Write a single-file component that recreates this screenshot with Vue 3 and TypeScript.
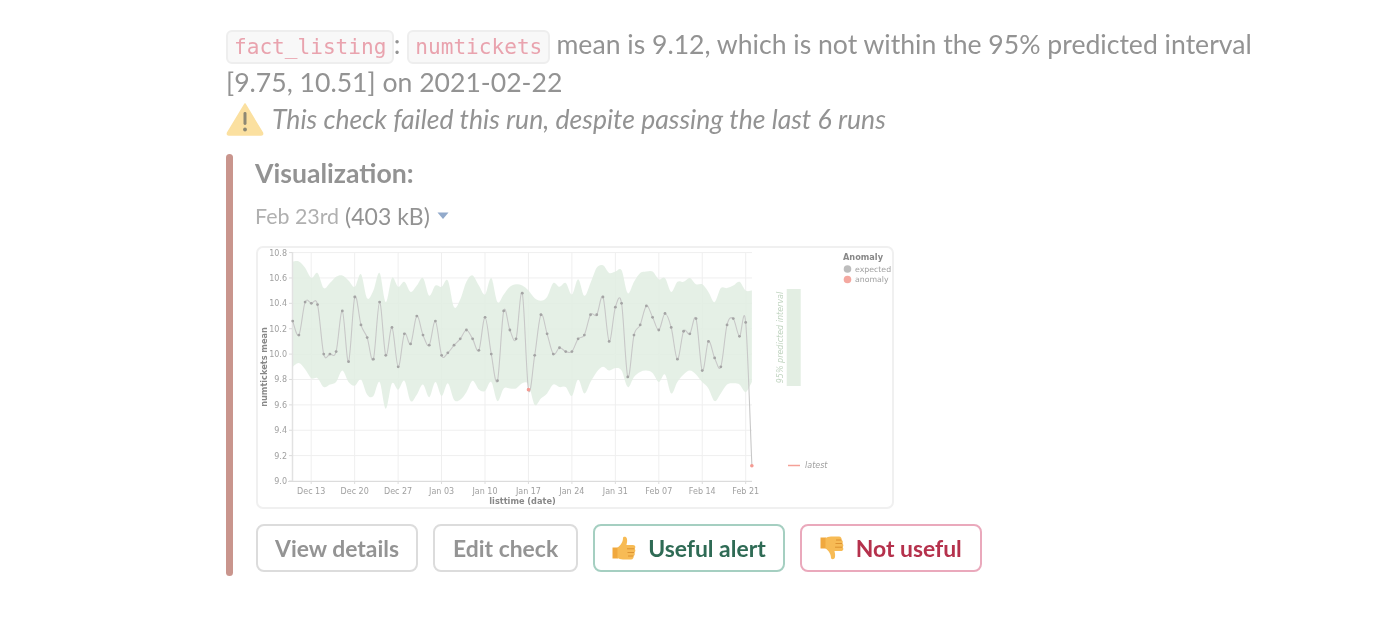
<script setup lang="ts">
const mean: number[] = [10.26,10.15,10.41,10.40,10.39,10.0,10.0,10.02,10.34,9.94,10.45,10.23,10.13,9.96,10.41,9.99,10.21,9.90,10.16,10.08,10.30,10.15,10.07,10.26,9.99,10.01,10.07,10.12,10.19,10.12,10.03,10.29,10.0,9.79,10.34,10.19,10.12,10.48,9.72,9.99,10.31,10.16,10.0,10.05,10.02,10.02,10.12,10.15,10.31,10.31,10.45,10.10,10.37,10.40,9.82,10.15,10.23,10.38,10.29,10.19,10.32,10.21,9.96,10.18,10.16,10.28,9.87,10.10,9.97,9.90,10.23,10.28,10.14,10.25,9.12]
const upper: number[] = [10.73,10.73,10.68,10.6,10.64,10.52,10.56,10.61,10.62,10.58,10.53,10.63,10.44,10.5,10.64,10.41,10.6,10.53,10.57,10.49,10.54,10.6,10.46,10.54,10.53,10.58,10.37,10.43,10.57,10.62,10.54,10.47,10.6,10.41,10.47,10.53,10.55,10.54,10.5,10.44,10.42,10.45,10.56,10.53,10.56,10.47,10.59,10.46,10.56,10.68,10.7,10.64,10.65,10.66,10.48,10.57,10.64,10.65,10.65,10.59,10.60,10.49,10.57,10.57,10.6,10.55,10.55,10.49,10.41,10.52,10.52,10.54,10.57,10.5,10.5]
const lower: number[] = [9.9,9.93,9.88,9.81,9.81,9.74,9.76,9.78,9.87,9.78,9.75,9.8,9.68,9.67,9.78,9.57,9.77,9.72,9.79,9.63,9.68,9.76,9.66,9.78,9.67,9.77,9.64,9.64,9.7,9.79,9.72,9.71,9.78,9.63,9.73,9.73,9.73,9.77,9.76,9.6,9.65,9.69,9.76,9.74,9.74,9.67,9.8,9.69,9.78,9.86,9.9,9.87,9.89,9.87,9.74,9.82,9.86,9.87,9.85,9.78,9.84,9.69,9.78,9.84,9.87,9.84,9.78,9.73,9.63,9.69,9.76,9.77,9.76,9.7,9.78]

const X0 = 292.7
const STEP = 6.205
const px = (i: number): number => X0 + i * STEP
const py = (v: number): number => 481 - (v - 9) * 126.9
type Pt = [number, number]
const pts = (a: number[]): Pt[] => a.map((v, i): Pt => [px(i), py(v)])

function curve(p: Pt[]): string {
  let d = ''
  for (let i = 0; i < p.length - 1; i++) {
    const p0 = p[Math.max(i - 1, 0)]
    const p1 = p[i]
    const p2 = p[i + 1]
    const p3 = p[Math.min(i + 2, p.length - 1)]
    const c1x = p1[0] + (p2[0] - p0[0]) / 6
    const c1y = p1[1] + (p2[1] - p0[1]) / 6
    const c2x = p2[0] - (p3[0] - p1[0]) / 6
    const c2y = p2[1] - (p3[1] - p1[1]) / 6
    d += ` C${c1x.toFixed(1)} ${c1y.toFixed(1)} ${c2x.toFixed(1)} ${c2y.toFixed(1)} ${p2[0].toFixed(1)} ${p2[1].toFixed(1)}`
  }
  return d
}

const up = pts(upper)
const low = pts(lower).reverse()
const bandPath = `M${up[0][0]} ${up[0][1]}${curve(up)} L${low[0][0]} ${low[0][1]}${curve(low)} Z`
const linePath = `M${px(0)} ${py(mean[0])}${curve(pts(mean))}`
const dots = mean.map((v, i) => ({ x: px(i), y: py(v), bad: i === 38 || i === 74 }))

const yTicks = [10.8, 10.6, 10.4, 10.2, 10.0, 9.8, 9.6, 9.4, 9.2, 9.0].map((v) => ({ y: py(v), label: v.toFixed(1) }))
const xTicks = ['Dec 13', 'Dec 20', 'Dec 27', 'Jan 03', 'Jan 10', 'Jan 17', 'Jan 24', 'Jan 31', 'Feb 07', 'Feb 14', 'Feb 21'].map((label, i) => ({ x: 311.2 + i * 43.45, label }))
</script>

<template>
  <main class="page">
    <p class="line">
      <code class="code">fact_listing</code>: <code class="code">numtickets</code> mean is 9.12, which is not within the 95% predicted interval<br />[9.75, 10.51] on 2021-02-22
    </p>
    <p class="warn">
      <svg class="warn-icon" viewBox="0 0 38 34" aria-hidden="true">
        <path d="M19 2 L36.500 31 Q37 33 35 33 L3 33 Q1 33 1.500 31 Z" fill="#fbe0a0" stroke="#fbe0a0" stroke-width="1.500" stroke-linejoin="round" />
        <rect x="17.500" y="10" width="3" height="13" rx="1.400" fill="#8d8873" />
        <circle cx="19" cy="27.500" r="1.900" fill="#8d8873" />
      </svg>
      <em>This check failed this run, despite passing the last 6 runs</em>
    </p>
    <section class="attachment">
      <div class="bar"></div>
      <div class="body">
        <h2 class="title">Visualization:</h2>
        <div class="file">
          <span class="date">Feb 23rd</span>
          <span class="size">(403 kB)</span>
          <svg class="caret" viewBox="0 0 12 8" aria-hidden="true"><path d="M0.500 0.500 H11.500 L6 7 Z" fill="#92aacb" /></svg>
        </div>
        <div class="frame">
          <svg class="chart" viewBox="258 248 634 259" role="img" aria-label="numtickets mean chart">
            <g stroke="#efefef" stroke-width="1">
              <line v-for="t in yTicks" :key="t.label" x1="292" x2="752" :y1="t.y" :y2="t.y" />
              <line v-for="t in xTicks" :key="t.label" :x1="t.x" :x2="t.x" y1="252.500" y2="481" />
            </g>
            <path :d="bandPath" fill="#e1eee2" fill-opacity="0.88" />
            <g stroke="#dcdcdc" stroke-width="1">
              <line x1="292.500" x2="292.500" y1="252" y2="481" stroke-width="1.500" stroke="#e2e2e2" />
              <line x1="288" x2="752" y1="481.500" y2="481.500" />
              <line v-for="t in yTicks" :key="'m' + t.label" x1="289" x2="292" :y1="t.y" :y2="t.y" />
              <line v-for="t in xTicks" :key="'m' + t.label" :x1="t.x" :x2="t.x" y1="481" y2="484" />
            </g>
            <path :d="linePath" fill="none" stroke="#c8c8c8" stroke-width="1.100" />
            <circle v-for="(d, i) in dots" :key="i" :cx="d.x" :cy="d.y" :r="d.bad ? 1.800 : 1.400" :fill="d.bad ? '#f49a92' : '#a4a4a4'" />
            <g class="tick">
              <text v-for="t in yTicks" :key="'l' + t.label" x="287" :y="t.y + 3" text-anchor="end">{{ t.label }}</text>
              <text v-for="t in xTicks" :key="'l' + t.label" :x="t.x" y="493.500" text-anchor="middle">{{ t.label }}</text>
            </g>
            <text class="axis" x="522.500" y="504" text-anchor="middle">listtime (date)</text>
            <text class="axis" transform="translate(266.500 367) rotate(-90)" text-anchor="middle">numtickets mean</text>
            <rect x="786.700" y="289" width="14" height="97" fill="#e3eee3" />
            <text class="interval" transform="translate(783 337.500) rotate(-90)" text-anchor="middle">95% predicted interval</text>
            <text class="axis legend-title" x="843" y="260">Anomaly</text>
            <circle cx="847.500" cy="269" r="3.800" fill="#bdbdbd" />
            <circle cx="847.500" cy="279.500" r="3.800" fill="#f4a8a0" />
            <text class="legend" x="855" y="272">expected</text>
            <text class="legend" x="855" y="282">anomaly</text>
            <line x1="788" x2="800" y1="465.500" y2="465.500" stroke="#f4a097" stroke-width="1.500" />
            <text class="latest" x="805" y="468">latest</text>
          </svg>
        </div>
        <div class="actions">
          <button class="btn" type="button">View details</button>
          <button class="btn wide" type="button">Edit check</button>
          <button class="btn good" type="button">
            <svg class="thumb" viewBox="0 0 24 24" aria-hidden="true">
              <path d="M0.500 11.500 H6 V22.500 H0.500 Z" fill="#f0a83e" />
              <path d="M5.500 11.500 C8.500 9.500 11 6 11 2 C11 0.500 14.500 0 15 3 C15.500 6 14.500 8 14.500 9 H21 C23.800 9 23.800 12 22.500 12.800 C23.800 13.800 23.600 16 22.300 16.500 C23.300 17.500 22.800 19.500 21.500 20 C22 21.500 21 23.500 19 23.500 H11 C8.500 23.500 7 22.500 5.500 22 Z" fill="#f7bb55" />
              <path d="M15 12.800 H22.500 M15.500 16.500 H22.300 M16 20 H21.500" stroke="#d98f2e" stroke-width="0.900" fill="none" />
            </svg>
            Useful alert
          </button>
          <button class="btn wide bad" type="button">
            <svg class="thumb flip" viewBox="0 0 24 24" aria-hidden="true">
              <path d="M0.500 11.500 H6 V22.500 H0.500 Z" fill="#f0a83e" />
              <path d="M5.500 11.500 C8.500 9.500 11 6 11 2 C11 0.500 14.500 0 15 3 C15.500 6 14.500 8 14.500 9 H21 C23.800 9 23.800 12 22.500 12.800 C23.800 13.800 23.600 16 22.300 16.500 C23.300 17.500 22.800 19.500 21.500 20 C22 21.500 21 23.500 19 23.500 H11 C8.500 23.500 7 22.500 5.500 22 Z" fill="#f7bb55" />
              <path d="M15 12.800 H22.500 M15.500 16.500 H22.300 M16 20 H21.500" stroke="#d98f2e" stroke-width="0.900" fill="none" />
            </svg>
            Not useful
          </button>
        </div>
      </div>
    </section>
  </main>
</template>

<style scoped>
.page {
  box-sizing: border-box;
  width: 1400px;
  height: 620px;
  padding: 26px 0 0 226px;
  overflow: hidden;
  font-family: Lato, "Liberation Sans", sans-serif;
  font-size: 26.6px;
  color: #939393;
  filter: blur(0.45px);
}
.line {
  width: 1040px;
  margin: 0;
  line-height: 37px;
}
.code {
  display: inline-block;
  margin-right: -0.6px;
  padding: 0 6px;
  border: 2px solid #eeeeee;
  border-radius: 6px;
  background: #f8f8f8;
  font-family: "DejaVu Sans Mono", monospace;
  font-size: 21.1px;
  line-height: 30px;
  color: #e9a3ae;
}
.warn {
  display: flex;
  align-items: center;
  gap: 8px;
  height: 37px;
  margin: -1px 0 0;
}
.warn-icon {
  width: 38px;
  height: 34px;
  flex: none;
}
.attachment {
  display: flex;
  gap: 22px;
  margin-top: 17px;
}
.bar {
  width: 7px;
  height: 422px;
  border-radius: 4px;
  background: #c9958d;
}
.title {
  margin: 1px 0 0;
  font-size: 26.6px;
  font-weight: 700;
  line-height: 36px;
}
.file {
  display: flex;
  align-items: center;
  gap: 6px;
  height: 28px;
  margin-top: 11px;
}
.date {
  font-size: 21.4px;
  color: #b0b0b0;
}
.size {
  font-size: 23px;
  color: #939393;
}
.caret {
  width: 12px;
  height: 8px;
  margin-left: 1px;
}
.frame {
  box-sizing: border-box;
  width: 638px;
  height: 263px;
  margin-top: 16px;
  margin-left: 1px;
  border: 2px solid #f0f0f0;
  border-radius: 7px;
  overflow: hidden;
}
.chart {
  display: block;
  width: 634px;
  height: 259px;
  filter: blur(0.3px);
}
.tick text {
  font-family: "DejaVu Sans", sans-serif;
  font-size: 8px;
  fill: #a0a0a0;
}
.axis {
  font-family: "DejaVu Sans", sans-serif;
  font-size: 8.2px;
  font-weight: 700;
  fill: #888888;
}
.legend {
  font-family: "DejaVu Sans", sans-serif;
  font-size: 7.8px;
  fill: #a0a0a0;
}
.interval {
  font-family: "DejaVu Sans", sans-serif;
  font-style: italic;
  font-size: 8px;
  fill: #c0d4c0;
}
.latest {
  font-family: "DejaVu Sans", sans-serif;
  font-style: italic;
  font-size: 8px;
  fill: #a0a0a0;
}
.actions {
  display: flex;
  gap: 15px;
  margin-top: 15px;
  margin-left: 1px;
}
.btn {
  box-sizing: border-box;
  display: flex;
  align-items: center;
  justify-content: center;
  gap: 12px;
  height: 48px;
  padding: 0 17px;
  border: 2px solid #dcdcdc;
  border-radius: 8px;
  background: #fff;
  font-family: Lato, "Liberation Sans", sans-serif;
  font-size: 22.9px;
  font-weight: 700;
  color: #949494;
}
.wide {
  padding: 0 18px;
}
.good {
  border-color: #a5cfc1;
  color: #2f6b55;
}
.bad {
  border-color: #eaa9bc;
  color: #b5314c;
}
.thumb {
  width: 24px;
  height: 24px;
  flex: none;
}
.flip {
  transform: scaleY(-1);
}
</style>
